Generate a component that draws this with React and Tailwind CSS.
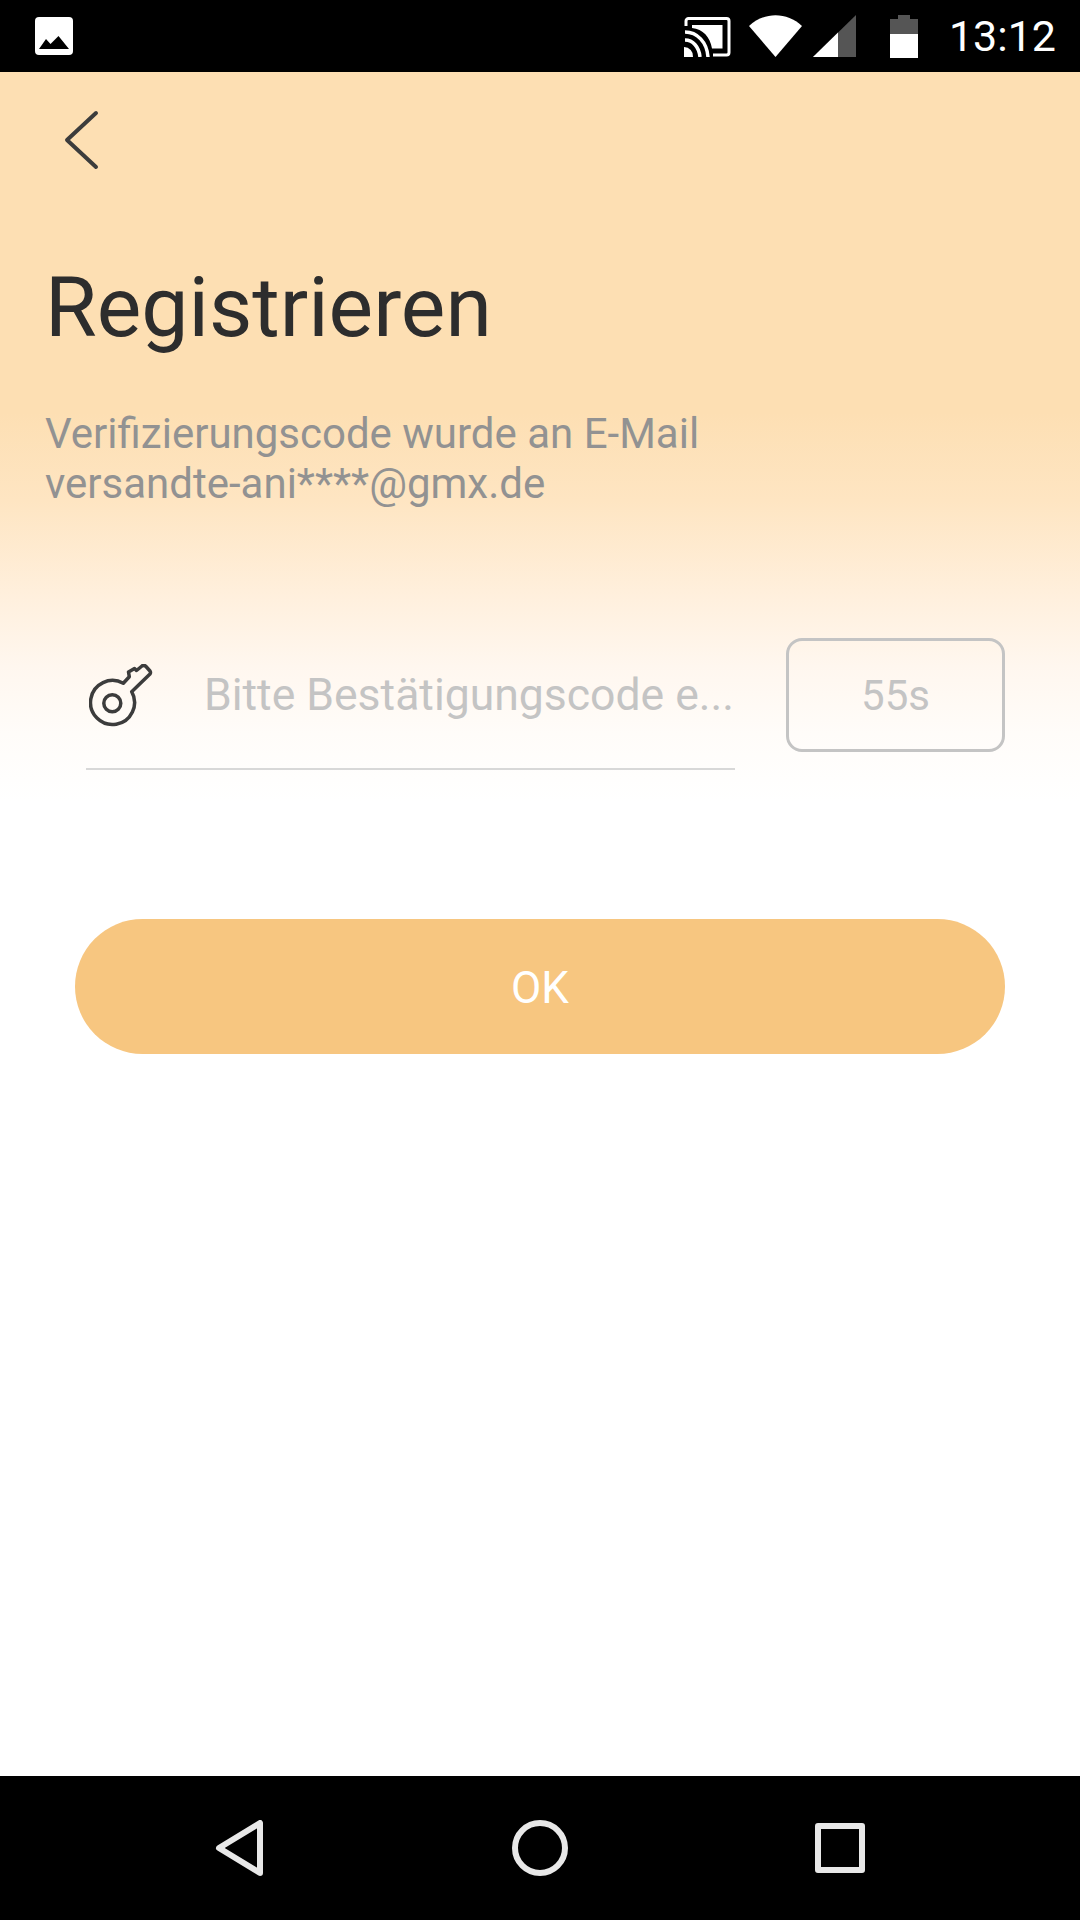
import React from 'react';

function StatusBar() {
  return (
    <div className="h-[72px] bg-black flex items-center pl-[35px] pr-[24px] shrink-0">
      <svg width="38" height="38" viewBox="0 0 38 38">
        <rect width="38" height="38" rx="4" fill="#fff" />
        <path d="M4 32 L11 22 L15.500 27 L23.500 19 L34 32 Z" fill="#000" />
      </svg>
      <div className="ml-auto flex items-center">
        <svg width="47" height="40" viewBox="0 0 47 40" className="mt-[1px]">
          <path d="M2 9 V4 a2.500 2.500 0 0 1 2.500 -2.500 H42.500 a2.500 2.500 0 0 1 2.500 2.500 V35.500 a2.500 2.500 0 0 1 -2.500 2.500 H29" fill="none" stroke="#fff" strokeWidth="3" />
          <path d="M8 8 H38.500 V31.500 H28 C26 20 19 12 8 11 Z" fill="#fff" />
          <path d="M1 15 C13 15 23 25 24 40 M1 23 C9 23 15 30 16 40" fill="none" stroke="#fff" strokeWidth="3.500" />
          <path d="M0 30 A 9 9 0 0 1 9 40 H0 Z" fill="#fff" />
        </svg>
        <svg width="53" height="42" viewBox="0 0 53 42" className="ml-[18px]">
          <path d="M0 11 C15 -3.500 38 -3.500 53 11 L26.500 42 Z" fill="#fff" />
        </svg>
        <svg width="43" height="42" viewBox="0 0 43 42" className="ml-[11px]">
          <path d="M0 42 L43 0 V42 Z" fill="#555" />
          <path d="M0 42 L25 17.600 V42 Z" fill="#fff" />
        </svg>
        <svg width="28" height="43" viewBox="0 0 28 43" className="ml-[34px]">
          <path d="M8 0 H20 V4 H28 V20 H0 V4 H8 Z" fill="#555" />
          <rect y="19" width="28" height="24" fill="#fff" />
        </svg>
        <span className="ml-[31px] text-[43px] leading-none text-white">13:12</span>
      </div>
    </div>
  );
}

function KeyIcon() {
  return (
    <svg width="64" height="64" viewBox="0 0 64 64" fill="none" stroke="#3c3c3c" strokeWidth="3.500" strokeLinejoin="round" className="ml-[3px] mt-[1px] shrink-0">
      <path d="M34.300 19.300 L40.300 12.700 L39.500 8 L45.500 4.500 L47.500 6.500 L53 2 Q55 0.500 57 2.500 L61 7 Q62 8.500 61 10 L42.700 27.700 A22 22 0 1 1 34.300 19.300 Z" />
      <circle cx="23.300" cy="39.300" r="8.500" />
    </svg>
  );
}

function NavBar() {
  return (
    <div className="h-[144px] bg-black flex items-center justify-center shrink-0">
      <div className="grid grid-cols-3 w-[900px] items-center justify-items-center">
        <svg width="50" height="56" viewBox="0 0 50 56" fill="none" stroke="#e8e8e8" strokeWidth="6" strokeLinejoin="round">
          <path d="M45 3 V53 L4 28 Z" />
        </svg>
        <svg width="56" height="56" viewBox="0 0 56 56" fill="none" stroke="#e8e8e8" strokeWidth="6">
          <circle cx="28" cy="28" r="25" />
        </svg>
        <svg width="50" height="50" viewBox="0 0 50 50" fill="none" stroke="#e8e8e8" strokeWidth="6" strokeLinejoin="round">
          <rect x="3" y="3" width="44" height="44" />
        </svg>
      </div>
    </div>
  );
}

export default function App() {
  return (
    <div className="w-[1080px] h-[1920px] flex flex-col bg-white font-['Roboto',sans-serif]">
      <StatusBar />
      <div className="flex-1 bg-[linear-gradient(to_bottom,#fddfb3_0px,#fddfb3_340px,#fee5c2_428px,#fff0de_528px,#fff7ef_595px,#fffcf9_661px,#ffffff_730px)]">
        <div className="pl-[64px] pt-[38px]">
          <svg width="36" height="60" viewBox="0 0 36 60" fill="none" stroke="#3c3c3c" strokeWidth="4" strokeLinecap="round" strokeLinejoin="round">
            <path d="M32 3 L3 30 L32 57" />
          </svg>
        </div>
        <h1 className="ml-[45px] mt-[93px] text-[84px] leading-[90px] font-normal text-[#2d2d2d]">Registrieren</h1>
        <p className="ml-[45px] mt-[56px] text-[42px] leading-[50px] text-[#929292]">
          Verifizierungscode wurde an E-Mail<br />versandte-ani****@gmx.de
        </p>
        <div className="flex items-start ml-[86px] mt-[129px] w-[919px]">
          <div className="w-[649px] h-[132px] border-b-2 border-[#d8d8d8] flex items-center pb-[16px]">
            <KeyIcon />
            <span className="ml-[51px] text-[44.500px] text-[#c4c4c4] whitespace-nowrap">Bitte Bestätigungscode e...</span>
          </div>
          <div className="ml-[51px] w-[219px] h-[114px] border-[3px] border-[#c4c4c4] rounded-[16px] flex items-center justify-center text-[42px] text-[#c4c4c4]">55s</div>
        </div>
        <button className="block ml-[75px] mt-[149px] w-[930px] h-[135px] pt-[2px] rounded-full bg-[#f7c680] text-white text-[44px]">OK</button>
      </div>
      <NavBar />
    </div>
  );
}
